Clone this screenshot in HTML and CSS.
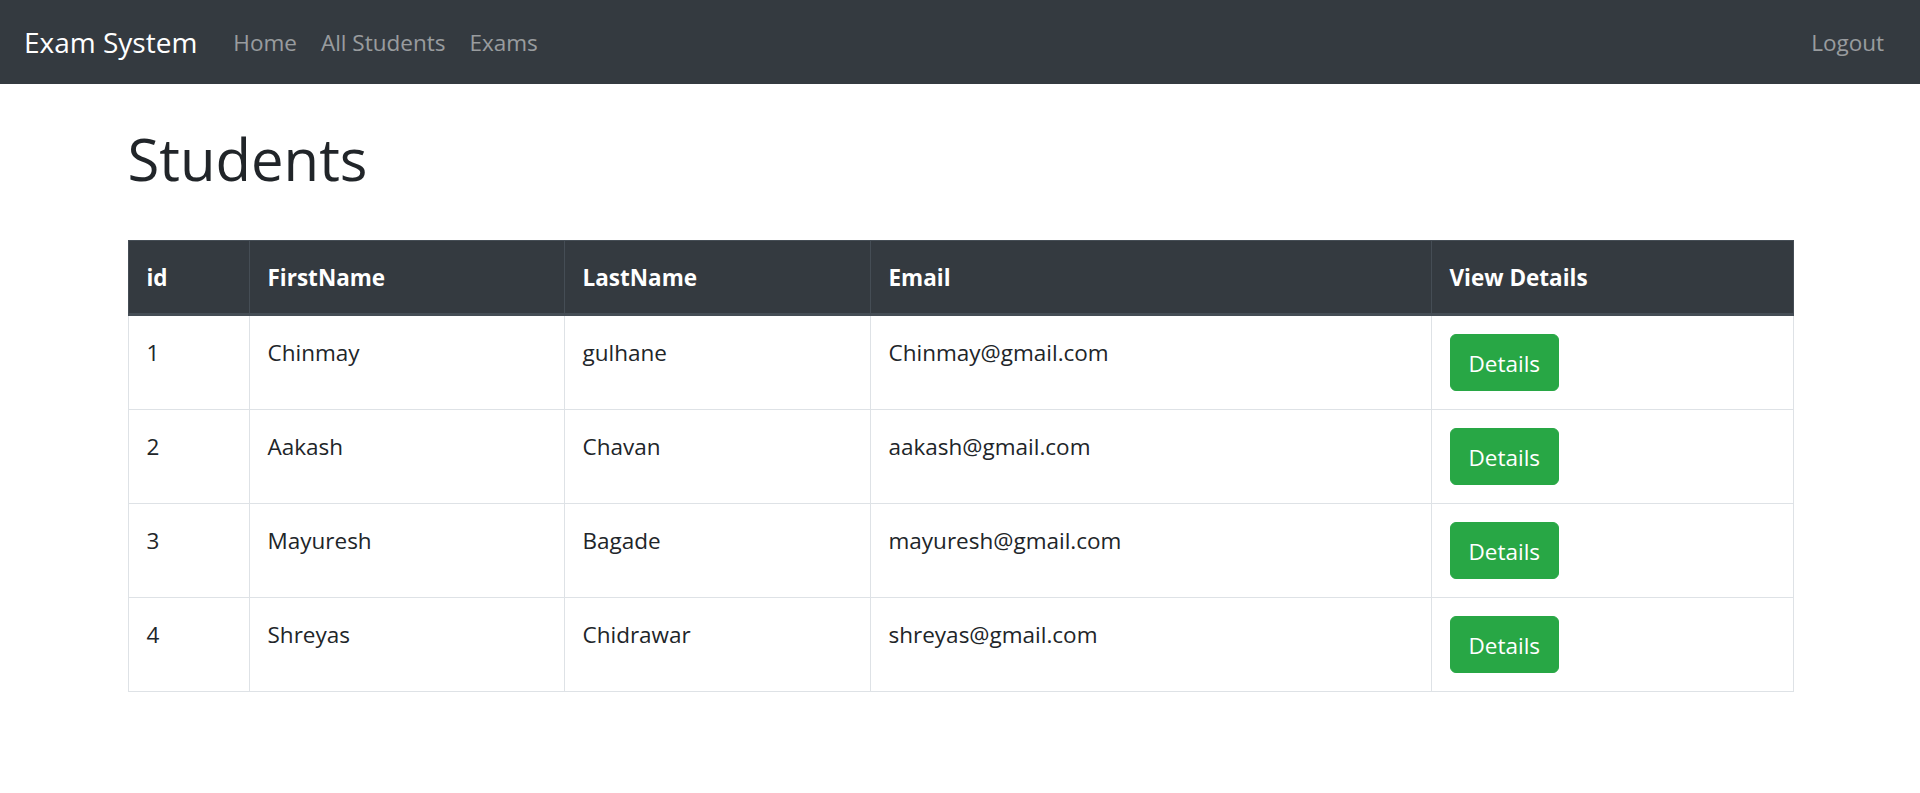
FILE: index.html
```html
<!DOCTYPE html>
<html lang="en">
<head>
<meta charset="utf-8">
<title>Exam System</title>
<link rel="stylesheet" href="styles.css">
</head>
<body>
<nav class="navbar">
  <a class="brand" href="#">Exam System</a>
  <ul class="nav-links">
    <li><a href="#">Home</a></li>
    <li><a href="#">All Students</a></li>
    <li><a href="#">Exams</a></li>
  </ul>
  <ul class="nav-right">
    <li><a href="#">Logout</a></li>
  </ul>
</nav>
<main class="container">
  <h1 class="title">Students</h1>
  <table class="students">
    <thead>
      <tr>
        <th class="c-id">id</th>
        <th class="c-first">FirstName</th>
        <th class="c-last">LastName</th>
        <th class="c-email">Email</th>
        <th class="c-view">View Details</th>
      </tr>
    </thead>
    <tbody>
      <tr><td>1</td><td>Chinmay</td><td>gulhane</td><td>Chinmay@gmail.com</td><td><a class="btn" href="#">Details</a></td></tr>
      <tr><td>2</td><td>Aakash</td><td>Chavan</td><td>aakash@gmail.com</td><td><a class="btn" href="#">Details</a></td></tr>
      <tr><td>3</td><td>Mayuresh</td><td>Bagade</td><td>mayuresh@gmail.com</td><td><a class="btn" href="#">Details</a></td></tr>
      <tr><td>4</td><td>Shreyas</td><td>Chidrawar</td><td>shreyas@gmail.com</td><td><a class="btn" href="#">Details</a></td></tr>
    </tbody>
  </table>
</main>
</body>
</html>
```

FILE: styles.css
```css
* { box-sizing: border-box; }
html, body { margin: 0; padding: 0; }
body {
  font-family: "Segoe UI", "Open Sans", "Noto Sans", Arial, sans-serif;
  font-size: 22.5px;
  line-height: 36px;
  color: #212529;
  background: #fff;
}
a { text-decoration: none; }

.navbar {
  display: flex;
  align-items: center;
  height: 84px;
  padding: 12px 24px;
  background: #343a40;
}
.brand {
  color: #fff;
  font-size: 28px;
  line-height: 45px;
  padding: 7.5px 0;
  margin-right: 24px;
}
.nav-links, .nav-right {
  display: flex;
  list-style: none;
  margin: 0;
  padding: 0;
}
.nav-right { margin-left: auto; }
.nav-links a, .nav-right a {
  display: block;
  padding: 13px 12px 11px;
  line-height: 36px;
  color: rgba(255,255,255,.5);
}

.container {
  width: 1710px;
  margin: 0 auto;
  padding: 0 22.5px;
}
.title {
  font-size: 58px;
  font-weight: 500;
  line-height: 72px;
  margin: 39px 0 45px;
}

.students {
  width: 100%;
  border-collapse: collapse;
  table-layout: fixed;
  border: 1px solid #dee2e6;
}
.students th, .students td {
  padding: 19px 18px 17px;
  text-align: left;
  vertical-align: top;
  line-height: 36px;
  border: 1px solid #dee2e6;
}
.students th {
  background: #343a40;
  color: #fff;
  font-weight: 700;
  border-color: #454d55;
  border-bottom: 3px solid #454d55;
}
.students td:last-child { padding-top: 18px; padding-bottom: 18px; }
.c-id { width: 121px; }
.c-first { width: 315px; }
.c-last { width: 306px; }
.c-email { width: 561px; }
.c-view { width: 362px; }

.btn {
  display: inline-block;
  background: #28a745;
  color: #fff;
  border: 1px solid #28a745;
  border-radius: 6px;
  padding: 10.5px 18px 8.5px;
  line-height: 36px;
}
```
